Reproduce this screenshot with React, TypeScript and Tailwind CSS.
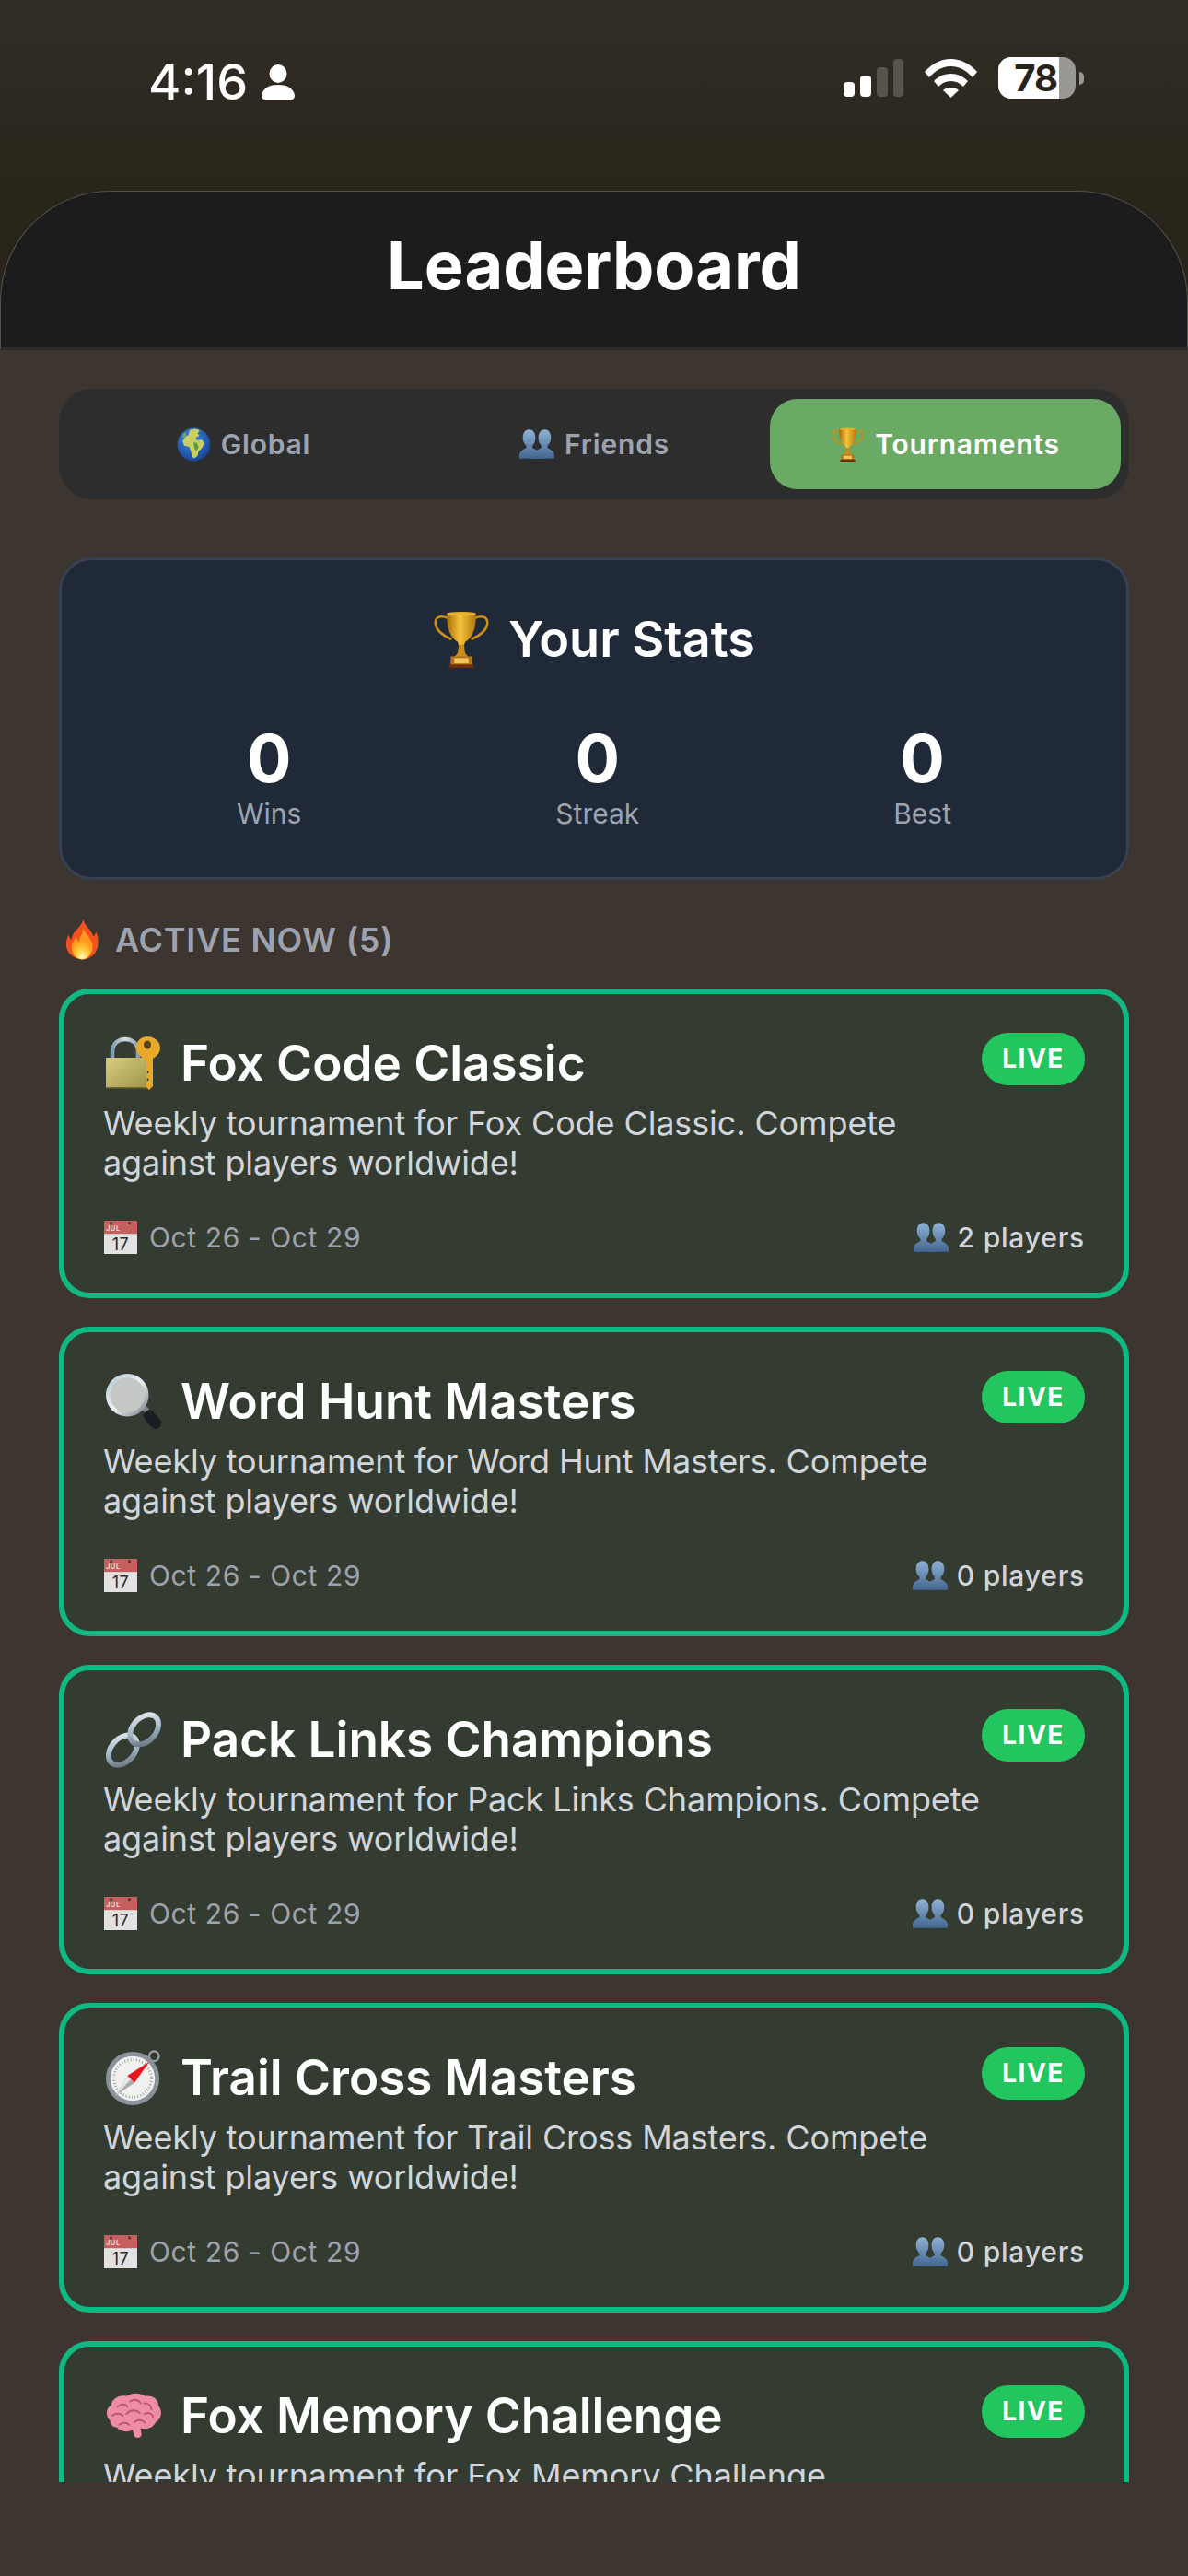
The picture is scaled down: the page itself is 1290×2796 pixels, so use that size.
const tournaments = [
  { id: 1, name: "Fox Code Classic", icon: <LockKeyEmoji />, players: 2 },
  { id: 2, name: "Word Hunt Masters", icon: <MagnifierEmoji />, players: 0 },
  { id: 3, name: "Pack Links Champions", icon: <LinkEmoji />, players: 0 },
  { id: 4, name: "Trail Cross Masters", icon: <CompassEmoji />, players: 0 },
  { id: 5, name: "Fox Memory Challenge", icon: <BrainEmoji />, players: 0 },
];

function TrophyEmoji({ className }: { className: string }) {
  return (
    <svg viewBox="0 0 64 64" className={className}>
      <defs>
        <linearGradient id="trophy-cup" x1="0" x2="1" y1="0" y2="0">
          <stop offset="0" stopColor="#a86c08" />
          <stop offset="0.45" stopColor="#f5c33b" />
          <stop offset="1" stopColor="#b5780f" />
        </linearGradient>
      </defs>
      <path d="M17 8C7 4 2 8 3 15c1 8 9 13 18 17M47 8c10-4 15 0 14 7-1 8-9 13-18 17" fill="none" stroke="#c98f17" strokeWidth="2.600" />
      <path d="M16 2h32c1 15-2 27-12 33l-1 4h-6l-1-4C18 29 15 17 16 2z" fill="url(#trophy-cup)" />
      <ellipse cx="32" cy="3" rx="16" ry="2" fill="#e9b12e" />
      <path d="M29 38h6l1 9 4 5H24l4-5z" fill="#c98d19" />
      <rect x="20" y="51" width="24" height="10" fill="#b5701a" />
      <rect x="24" y="53" width="16" height="6" fill="#f0c75f" />
      <rect x="18" y="60" width="28" height="4" rx="1" fill="#6f300c" />
    </svg>
  );
}

function GlobeEmoji({ className }: { className: string }) {
  return (
    <svg viewBox="0 0 64 64" className={className}>
      <defs>
        <radialGradient id="globe-sea" cx="0.42" cy="0.35" r="0.75">
          <stop offset="0" stopColor="#3f8fe0" />
          <stop offset="1" stopColor="#123a92" />
        </radialGradient>
      </defs>
      <circle cx="32" cy="32" r="31" fill="url(#globe-sea)" />
      <path d="M24 5c7-3 15-2 19 1l-4 5 3 5-7 3 3 5 9-1 5 7-6 10-5 4-2 9-6 5-4-3-3-12-3-7-9-2-3-8 5-9 6-3z" fill="#c9cf62" />
      <path d="M31 28l7 1 3 8-5 8-3-7z" fill="#5c9a3a" />
      <path d="M12 12l6-3-2 8-5 3z" fill="#7fae45" />
    </svg>
  );
}

function PeopleEmoji({ className }: { className: string }) {
  return (
    <svg viewBox="0 0 72 60" className={className}>
      <defs>
        <linearGradient id="people-fill" x1="0" x2="0" y1="0" y2="1">
          <stop offset="0" stopColor="#8fb2d6" />
          <stop offset="1" stopColor="#42668f" />
        </linearGradient>
      </defs>
      <path d="M20 0c9 0 13 8 13 17 0 7-3 13-6 16v5c7 3 13 7 16 12l2 10H0v-9c2-7 7-10 14-13v-5c-4-4-7-9-7-16C7 8 11 0 20 0z" fill="url(#people-fill)" />
      <path d="M52 0c9 0 13 8 13 17 0 7-3 12-7 16v5c7 3 12 6 14 13v9H27l2-10c3-5 9-9 16-12v-5c-3-3-6-9-6-16 0-9 4-17 13-17z" fill="url(#people-fill)" />
    </svg>
  );
}

function FireEmoji({ className }: { className: string }) {
  return (
    <svg viewBox="0 0 36 44" className={className}>
      <defs>
        <radialGradient id="fire-core" cx="0.5" cy="0.95" r="0.55">
          <stop offset="0" stopColor="#fffbd0" />
          <stop offset="0.5" stopColor="#ffd23c" />
          <stop offset="1" stopColor="#ff9a1f" />
        </radialGradient>
      </defs>
      <path d="M19 0c2 7 9 11 11 18 2-1 3-3 3-5 3 5 3 11 2 17-2 9-9 14-17 14S2 39 0 30c-1-6 1-10 3-14 0 3 1 5 3 6 0-9 10-13 13-22z" fill="#f4511e" />
      <path d="M19 9c1 6 8 10 10 17 2 9-4 18-11 18S5 37 6 29c1-5 4-7 5-10 1 2 1 4 3 5 1-5 5-9 5-15z" fill="url(#fire-core)" />
    </svg>
  );
}

function LockKeyEmoji() {
  return (
    <svg viewBox="-1 -2 62 62" className="h-[62px] w-[62px] shrink-0">
      <defs>
        <linearGradient id="lock-body" x1="0" x2="1" y1="0" y2="1">
          <stop offset="0" stopColor="#d8cd82" />
          <stop offset="1" stopColor="#9f9446" />
        </linearGradient>
        <linearGradient id="lock-shackle" x1="0" x2="1" y1="0" y2="0">
          <stop offset="0" stopColor="#7f9bb5" />
          <stop offset="0.5" stopColor="#d5dfe8" />
          <stop offset="1" stopColor="#8c99a5" />
        </linearGradient>
      </defs>
      <path d="M7 24V17C7 8 13 3 21 3s14 5 14 14v7" fill="none" stroke="url(#lock-shackle)" strokeWidth="4.500" />
      <rect x="0" y="23" width="45" height="33" rx="1" fill="url(#lock-body)" />
      <path d="M0 55h45v1.500H0z" fill="#6f6a2e" />
      <path d="M41 24c-5-3-8-7-8-12C33 5 38 0 45 0s14 5 14 12c0 5-3 9-8 12v30l-4 4-3-3v-6l3-2-3-3v-3l3-2-3-3v-9z" fill="#e8a92a" />
      <ellipse cx="45" cy="9" rx="4" ry="4.500" fill="#57431c" />
    </svg>
  );
}

function MagnifierEmoji() {
  return (
    <svg viewBox="0 0 64 64" className="h-[62px] w-[62px] shrink-0">
      <defs>
        <linearGradient id="lens-ring" x1="0" x2="1" y1="0" y2="1">
          <stop offset="0" stopColor="#a9c4d8" />
          <stop offset="0.5" stopColor="#f0f2f3" />
          <stop offset="1" stopColor="#6f7680" />
        </linearGradient>
      </defs>
      <path d="M41 41l5-4 4 4-5 4z" fill="#7d8288" />
      <path d="M43 47c2-3 4-5 7-6 2 0 11 10 13 13 1 2 0 5-2 7-2 2-5 3-7 1-3-2-12-11-11-15z" fill="#1b1d22" />
      <circle cx="25" cy="25" r="24" fill="url(#lens-ring)" />
      <circle cx="25" cy="25" r="19.500" fill="#c5c7c5" />
    </svg>
  );
}

function LinkEmoji() {
  return (
    <svg viewBox="0 0 64 64" className="h-[62px] w-[62px] shrink-0">
      <defs>
        <linearGradient id="link-metal" x1="0" x2="1" y1="0" y2="1">
          <stop offset="0" stopColor="#e6eef3" />
          <stop offset="0.55" stopColor="#9fb3c2" />
          <stop offset="1" stopColor="#5e6a73" />
        </linearGradient>
      </defs>
      <ellipse cx="20" cy="44" rx="13" ry="19" transform="rotate(42 20 44)" fill="none" stroke="url(#link-metal)" strokeWidth="6" />
      <ellipse cx="44" cy="21" rx="13" ry="19" transform="rotate(42 44 21)" fill="none" stroke="url(#link-metal)" strokeWidth="6" />
    </svg>
  );
}

function CompassEmoji() {
  return (
    <svg viewBox="0 0 64 64" className="h-[62px] w-[62px] shrink-0">
      <circle cx="55" cy="8" r="5.500" fill="none" stroke="#9aa0a5" strokeWidth="2.400" />
      <circle cx="31" cy="33" r="30" fill="#8a929b" />
      <circle cx="31" cy="33" r="25" fill="#f1f1f0" />
      <circle cx="31" cy="33" r="21" fill="none" stroke="#9c9f9f" strokeWidth="3" strokeDasharray="1 2.300" />
      <path d="M50 14L25 30l8 8z" fill="#e8161d" />
      <path d="M12 52l13-22 8 8z" fill="#a9abad" />
      <path d="M12 52l13-22 4 4z" fill="#e6e6e6" />
    </svg>
  );
}

function BrainEmoji() {
  return (
    <svg viewBox="0 0 64 52" className="h-[52px] w-[62px] shrink-0">
      <path d="M6 32C0 26 1 17 7 14c1-7 9-12 17-10 6-4 15-4 21 0 9-1 15 4 15 11 5 6 3 15-3 18-3 7-11 9-17 7l1 7c0 4-6 5-8 2l-2-7c-6 3-14 2-18-3-3 0-5-2-7-4z" fill="#ee8ba5" />
      <path d="M14 16c4-4 9-3 11 0M28 10c5-3 10-2 12 2M44 12c5 0 8 3 8 7M8 26c4-3 9-3 12 0M24 24c4-5 11-5 15-1M44 24c4-2 8-1 10 3M16 36c4-3 8-3 11 0M33 33c4-3 9-3 12 1" fill="none" stroke="#bf5372" strokeWidth="2" strokeLinecap="round" />
    </svg>
  );
}

function CalendarEmoji() {
  return (
    <svg viewBox="0 0 38 38" className="h-[36px] w-[38px] shrink-0">
      <rect width="38" height="38" fill="#e2e2e2" />
      <rect width="38" height="15" fill="#c5605f" />
      <circle cx="8" cy="3" r="1.600" fill="#3b3b3b" />
      <circle cx="29" cy="3" r="1.600" fill="#3b3b3b" />
      <text x="2" y="12" fontSize="8" fontWeight="600" fill="#f5dede" fontFamily="Inter, sans-serif">JUL</text>
      <text x="19" y="34" fontSize="19" textAnchor="middle" fill="#2a2a2a" fontFamily="Inter, sans-serif">17</text>
    </svg>
  );
}

function StatusBar() {
  return (
    <div className="flex h-[207px] items-start justify-between bg-gradient-to-b from-[#322d27] to-[#29251a] pl-[161px] pr-[113px] pt-[62px]">
      <div className="flex items-center gap-[15px] text-white">
        <span className="text-[54px] font-medium leading-[54px]">4:16</span>
        <svg viewBox="0 0 36 38" className="h-[38px] w-[36px]" fill="currentColor">
          <ellipse cx="18" cy="10" rx="9.500" ry="10" />
          <path d="M0 33c2-8 9-11 18-11s16 3 18 11c0 3-1 5-4 5H4c-3 0-4-2-4-5z" />
        </svg>
      </div>
      <div className="flex items-center">
        <svg viewBox="0 0 65 41" className="h-[41px] w-[65px]">
          <rect x="0" y="25" width="12" height="16" rx="4" fill="#fff" />
          <rect x="18" y="18" width="12" height="23" rx="4" fill="#fff" />
          <rect x="36" y="9" width="12" height="32" rx="4" fill="#57544d" />
          <rect x="54" y="0" width="11" height="41" rx="4" fill="#57544d" />
        </svg>
        <svg viewBox="0 0 57 42" className="ml-[23px] h-[42px] w-[57px]" fill="#fff">
          <path d="M0 14C8 5 18 0 28.500 0S49 5 57 14l-5 6C45 12 37 8 28.500 8S12 12 5 20z" />
          <path d="M10 24c5-5 11-8 18.500-8S42 19 47 24l-5 6c-4-4-8-6-13.500-6S19 26 15 30z" />
          <path d="M20 34c2-2 5-3 8.500-3s6.500 1 8.500 3l-8.500 8z" />
        </svg>
        <div className="ml-[23px] flex items-center gap-[4px]">
          <div className="flex h-[45px] w-[84px] items-center rounded-[14px] bg-[#9a9894]">
            <div className="flex h-full w-[66px] items-center justify-end rounded-l-[14px] bg-white pr-[2px] text-[40px] font-bold leading-[45px] tracking-[-1px] text-[#26231d]">
              78
            </div>
          </div>
          <div className="h-[14px] w-[5px] rounded-r-full bg-[#9a9894]" />
        </div>
      </div>
    </div>
  );
}

function Tabs() {
  return (
    <div className="flex h-[120px] rounded-[36px] bg-[#2d2d2d] py-[11px] pl-[10px] pr-[9px]">
      <button className="flex flex-1 items-center justify-center gap-[11px] text-[30px] font-semibold tracking-[0.8px] text-[#9ca3af]">
        <GlobeEmoji className="h-[37px] w-[37px]" />
        Global
      </button>
      <button className="flex flex-1 items-center justify-center gap-[11px] text-[30px] font-semibold tracking-[0.8px] text-[#9ca3af]">
        <PeopleEmoji className="h-[32px] w-[38px]" />
        Friends
      </button>
      <button className="flex flex-1 items-center justify-center gap-[11px] rounded-[30px] bg-[#6aaa64] text-[30px] font-semibold tracking-[0.8px] text-white">
        <TrophyEmoji className="h-[37px] w-[37px]" />
        Tournaments
      </button>
    </div>
  );
}

function Stat({ value, label }: { value: number; label: string }) {
  return (
    <div className="flex flex-col items-center">
      <div className="text-[72px] font-bold leading-[72px] text-white">{value}</div>
      <div className="mt-[6px] text-[30px] leading-[36px] text-[#9ca3af]">{label}</div>
    </div>
  );
}

function YourStats() {
  return (
    <div className="mt-[63px] h-[350px] rounded-[36px] border-[3px] border-[#374151] bg-[#1f2937] pt-[54px]">
      <div className="flex items-center justify-center gap-[20px] text-[54px] font-semibold leading-[64px] text-white">
        <TrophyEmoji className="h-[62px] w-[62px]" />
        Your Stats
      </div>
      <div className="mt-[61px] flex justify-around px-[52px]">
        <Stat value={0} label="Wins" />
        <Stat value={0} label="Streak" />
        <Stat value={0} label="Best" />
      </div>
    </div>
  );
}

function TournamentCard({ name, icon, players }: { name: string; icon: React.ReactNode; players: number }) {
  return (
    <div className="h-[336px] shrink-0 rounded-[33px] border-[6px] border-[#10b981] bg-[#343b30] px-[42px] pt-[42px]">
      <div className="flex items-start justify-between">
        <div className="flex h-[66px] items-center gap-[20px] text-[53px] font-semibold leading-[66px] text-white">
          <span className="ml-[2px] flex">{icon}</span>
          {name}
        </div>
        <div className="flex h-[57px] w-[112px] items-center justify-center rounded-full bg-[#22c55e] text-[28px] font-bold leading-[57px] tracking-[1.5px] text-white">
          LIVE
        </div>
      </div>
      <p className="mt-[11px] w-[952px] text-[36px] leading-[42.5px] tracking-[-0.12px] text-[#d1d5db]">
        Weekly tournament for {name}. Compete against players worldwide!
      </p>
      <div className="mt-[42px] flex items-center justify-between">
        <div className="flex items-center gap-[12px] text-[30px] leading-[36px] tracking-[0.6px] text-[#9ca3af]">
          <CalendarEmoji />
          Oct 26 - Oct 29
        </div>
        <div className="flex items-center gap-[10px] text-[30px] font-medium leading-[36px] tracking-[0.8px] text-[#d1d5db]">
          <PeopleEmoji className="h-[32px] w-[38px]" />
          {players} players
        </div>
      </div>
    </div>
  );
}

export default function App() {
  return (
    <div className="flex h-[2796px] w-[1290px] flex-col overflow-hidden bg-[#3d3530] font-['Inter',sans-serif]">
      <StatusBar />
      <div className="shrink-0 bg-[#29251a]">
        <div className="flex h-[173px] items-center justify-center rounded-t-[120px] border-x border-t border-[#55534d] border-b-[3px] border-b-[#2d2d2f] bg-[#1c1c1e] pb-[10px] text-[72px] font-bold leading-[80px] text-white">
          Leaderboard
        </div>
      </div>
      <div className="h-[2314px] shrink-0 overflow-hidden px-[64px] pt-[42px]">
        <Tabs />
        <YourStats />
        <div className="mt-[42px] flex h-[46px] items-center gap-[18px] pl-[8px] text-[36px] font-semibold leading-[46px] tracking-[0.76px] text-[#9ca3af]">
          <FireEmoji className="h-[44px] w-[35px]" />
          ACTIVE NOW (5)
        </div>
        <div className="mt-[30px] flex flex-col gap-[31px]">
          {tournaments.map((t) => (
            <TournamentCard key={t.id} name={t.name} icon={t.icon} players={t.players} />
          ))}
        </div>
      </div>
    </div>
  );
}
